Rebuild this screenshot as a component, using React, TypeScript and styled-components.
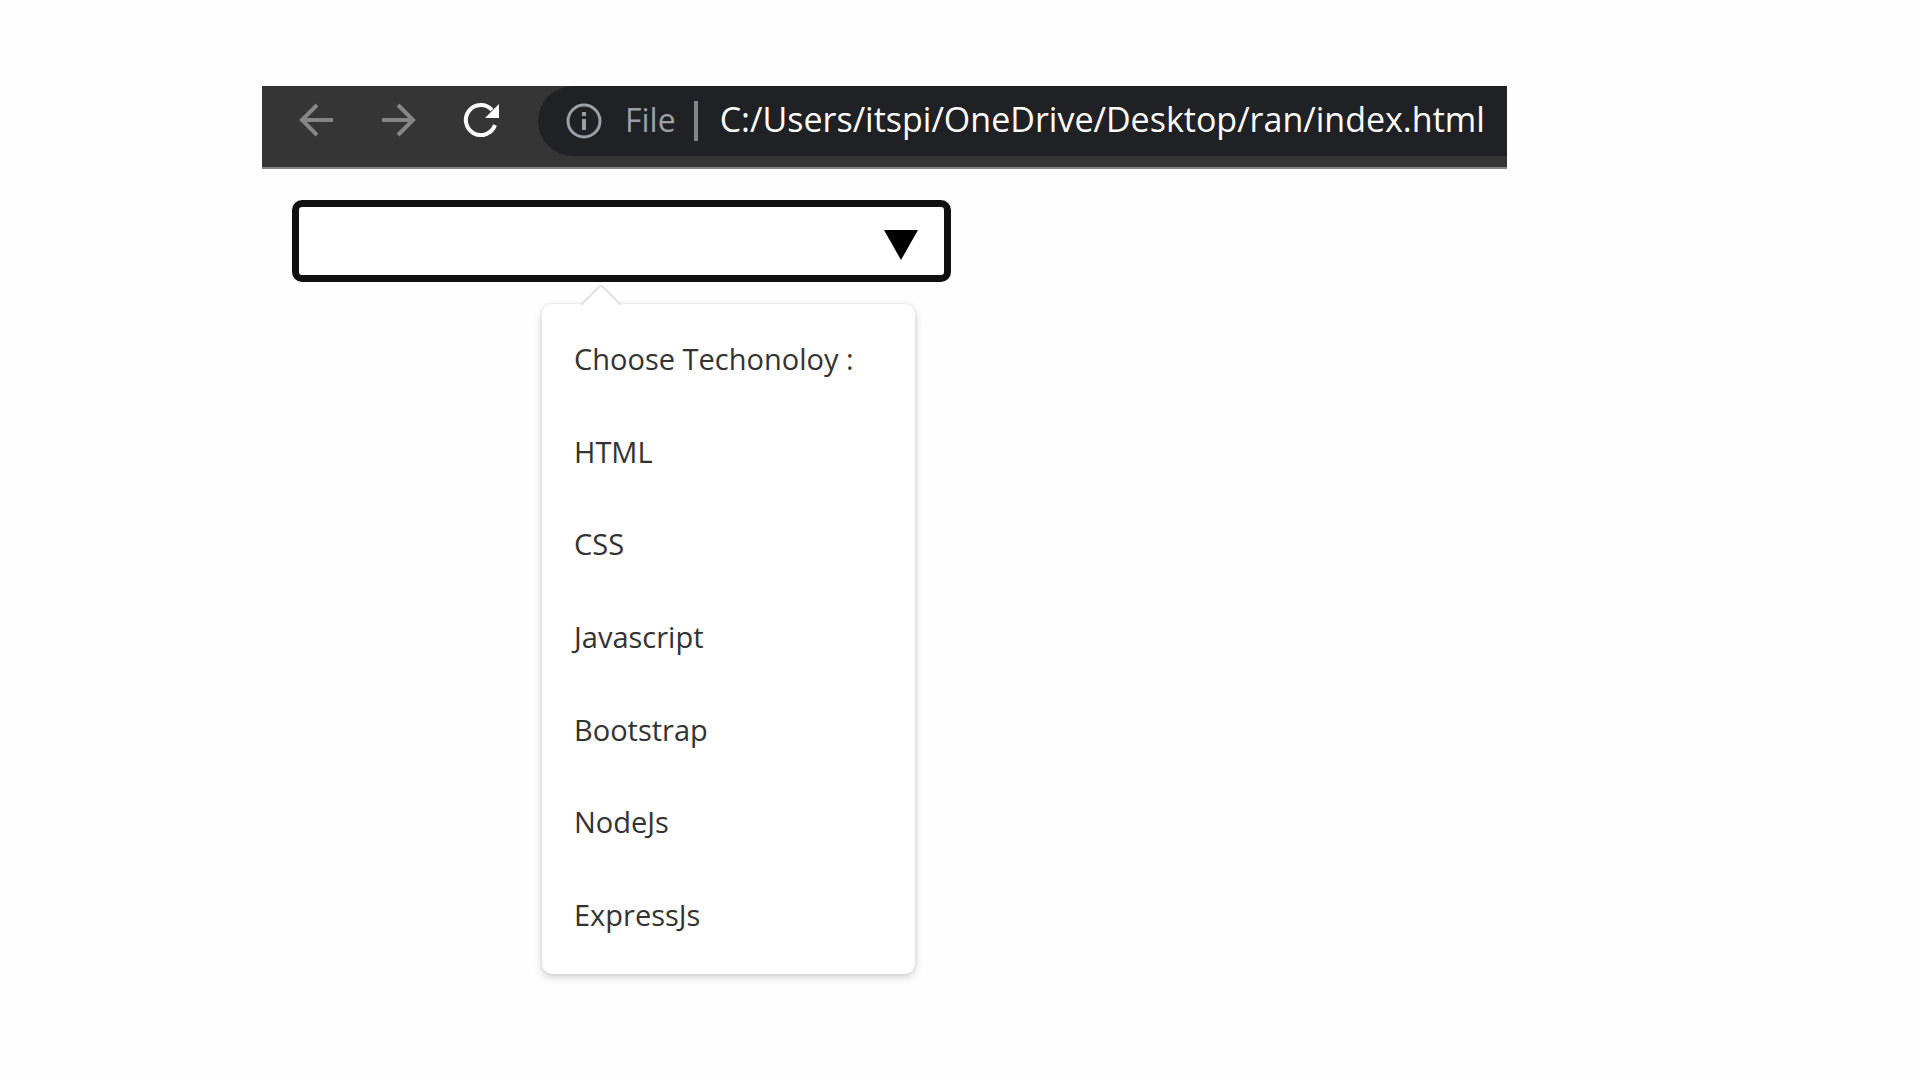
import React, { useState } from "react";
import styled, { createGlobalStyle } from "styled-components";

const GlobalStyle = createGlobalStyle`
  *, *::before, *::after { box-sizing: border-box; }
  body {
    margin: 0;
    background: #fefefe;
    font-family: "Open Sans", "Noto Sans", sans-serif;
  }
  button, input { font: inherit; color: inherit; }
`;

const Page = styled.main`
  max-width: 1507px;
  padding: 86px 0 86px 262px;
`;

const Toolbar = styled.header`
  display: flex;
  align-items: flex-start;
  height: 83px;
  overflow: hidden;
  background: #353535;
  border-bottom: 2px solid #858585;
`;

const NavButtons = styled.nav`
  display: flex;
  gap: 42px;
  padding: 14px 38px 0 34px;
`;

const NavButton = styled.button<{ $active?: boolean }>`
  display: flex;
  width: 40px;
  height: 40px;
  padding: 0;
  border: 0;
  background: none;
  color: ${(p) => (p.$active ? "#ffffff" : "#868686")};
`;

const AddressBar = styled.div`
  flex: 1;
  min-width: 0;
  display: flex;
  align-items: center;
  height: 70px;
  padding-left: 27px;
  background: #202124;
  border-radius: 36px 0 0 36px;
`;

const InfoButton = styled.button`
  display: flex;
  padding: 0;
  border: 0;
  background: none;
  color: #9aa0a6;
`;

const Scheme = styled.span`
  margin-left: 22px;
  padding-bottom: 2px;
  font-size: 32px;
  line-height: 40px;
  color: #9aa0a6;
`;

const Divider = styled.span`
  width: 4px;
  height: 40px;
  margin: 0 22px 0 18px;
  background: #80868b;
`;

const AddressInput = styled.input`
  flex: 1;
  min-width: 0;
  height: 48px;
  padding: 0 0 4px;
  border: 0;
  outline: 0;
  background: none;
  font-size: 34px;
  color: #ffffff;
`;

const Content = styled.section`
  padding: 31px 30px 0;
`;

const Combo = styled.div`
  max-width: 659px;
`;

const Field = styled.div`
  display: flex;
  align-items: center;
  height: 82px;
  padding-right: 26px;
  border: 7px solid #101010;
  border-radius: 10px;
  background: #ffffff;
`;

const FieldInput = styled.input`
  flex: 1;
  min-width: 0;
  height: 60px;
  padding: 0 16px;
  border: 0;
  outline: 0;
  background: none;
  font-size: 29px;
`;

const ArrowButton = styled.button`
  display: flex;
  padding: 7px 0 0;
  border: 0;
  background: none;
  color: #000000;
`;

const Menu = styled.div`
  position: relative;
  margin: 22px 36px 0 250px;
  min-height: 670px;
  padding: 9px 0 13px;
  display: grid;
  grid-auto-rows: 1fr;
  background: #ffffff;
  border-radius: 10px;
  box-shadow: 0 3px 8px rgba(0, 0, 0, 0.2), 0 0 3px rgba(0, 0, 0, 0.08);
`;

const Pointer = styled.svg`
  position: absolute;
  top: -20px;
  left: 38px;
`;

const Option = styled.button`
  padding: 0 32px;
  border: 0;
  background: none;
  text-align: left;
  font-size: 29px;
  line-height: 40px;
  color: #333333;
`;

const technologies = [
  "Choose Techonoloy :",
  "HTML",
  "CSS",
  "Javascript",
  "Bootstrap",
  "NodeJs",
  "ExpressJs",
];

export default function App() {
  const [value, setValue] = useState("");
  const [address, setAddress] = useState("C:/Users/itspi/OneDrive/Desktop/ran/index.html");

  return (
    <>
      <GlobalStyle />
      <Page>
        <Toolbar>
          <NavButtons aria-label="Navigation">
            <NavButton type="button" aria-label="Back">
              <svg width="40" height="40" fill="none" stroke="currentColor" strokeWidth="4">
                <path d="M37 20H6M21 5L6 20l15 15" />
              </svg>
            </NavButton>
            <NavButton type="button" aria-label="Forward">
              <svg width="40" height="40" fill="none" stroke="currentColor" strokeWidth="4">
                <path d="M4 20h31M20 5l15 15-15 15" />
              </svg>
            </NavButton>
            <NavButton type="button" aria-label="Reload" $active>
              <svg width="40" height="40" fill="none" stroke="currentColor" strokeWidth="4">
                <path d="M35 25A15 15 0 1 1 32 10" />
                <path d="M39 4v14H25z" fill="currentColor" stroke="none" />
              </svg>
            </NavButton>
          </NavButtons>
          <AddressBar>
            <InfoButton type="button" aria-label="Site information">
              <svg width="38" height="38" fill="none" stroke="currentColor">
                <circle cx="19" cy="19" r="16" strokeWidth="3" />
                <path d="M19 17v11M19 10v4" strokeWidth="4" />
              </svg>
            </InfoButton>
            <Scheme>File</Scheme>
            <Divider />
            <AddressInput
              aria-label="Address"
              value={address}
              onChange={(e) => setAddress(e.target.value)}
            />
          </AddressBar>
        </Toolbar>
        <Content>
          <Combo>
            <Field>
              <FieldInput
                aria-label="Technology"
                value={value}
                onChange={(e) => setValue(e.target.value)}
              />
              <ArrowButton type="button" aria-label="Show options">
                <svg width="34" height="30" fill="currentColor">
                  <path d="M0 0h34L17 30z" />
                </svg>
              </ArrowButton>
            </Field>
            <Menu>
              <Pointer width="42" height="22">
                <path d="M1 21L19 3q2-2 4 0l18 18" fill="#ffffff" stroke="#e2e2e2" strokeWidth="2" />
              </Pointer>
              {technologies.map((name) => (
                <Option key={name} type="button" onClick={() => setValue(name)}>
                  {name}
                </Option>
              ))}
            </Menu>
          </Combo>
        </Content>
      </Page>
    </>
  );
}
